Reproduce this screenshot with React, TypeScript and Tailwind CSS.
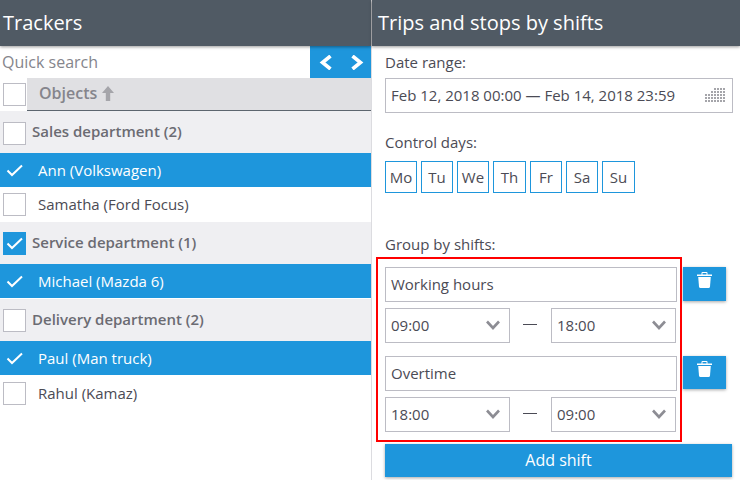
import React from "react";

const Check = () => (
  <svg width="18" height="14" viewBox="0 0 18 14" fill="none" className="block">
    <path d="M1.5 7.5 L6 12 L16 2.5" stroke="#fff" strokeWidth="2" />
  </svg>
);

const Box = ({ state }: { state?: "blue" | "plain" }) =>
  state === "blue" ? (
    <div className="w-[23px] h-[23px] flex items-center justify-center shrink-0"><Check /></div>
  ) : (
    <div className="w-[23px] h-[23px] bg-white border border-[#bcbcc4] shrink-0" />
  );

const Group = ({ label, checked, h }: { label: string; checked?: boolean; h: string }) => (
  <div className={`flex items-center bg-[#efeff2] pl-[3px] ${h}`}>
    {checked ? (
      <div className="w-[23px] h-[23px] bg-[#1e96dc] flex items-center justify-center shrink-0"><Check /></div>
    ) : (
      <Box />
    )}
    <span className={`ml-[6px] text-[15px] font-semibold text-[#6b6b72] ${h === "h-[40px]" ? "mb-[3px]" : "mb-[1px]"}`}>{label}</span>
  </div>
);

const Item = ({ label, selected, h }: { label: string; selected?: boolean; h: string }) => (
  <div className={`flex items-center pl-[3px] ${h} ${selected ? "bg-[#1e96dc] text-white" : "bg-white text-[#4b4b55]"}`}>
    <Box state={selected ? "blue" : "plain"} />
    <span className={`ml-[12px] text-[15px] ${selected ? "font-medium" : ""}`}>{label}</span>
  </div>
);

const Select = ({ value }: { value: string }) => (
  <div className="w-[125px] h-[35px] border border-[#bcbcc4] flex items-center justify-between pl-[5px] pr-[9px] text-[15px] text-[#4b4b55] bg-white">
    <span className="mb-[1px]">{value}</span>
    <svg width="14" height="10" viewBox="0 0 14 10" fill="none" className="mb-[2px]">
      <path d="M1 1.5 L7 8 L13 1.5" stroke="#8d8d94" strokeWidth="2.6" />
    </svg>
  </div>
);

const Trash = () => (
  <svg width="15" height="16" viewBox="0 0 15 16" fill="#fff">
    <path d="M0 2.5 H4.5 V1 Q4.5 0 5.5 0 H9.5 Q10.5 0 10.5 1 V2.5 H15 V4 H0 Z M5.5 1 V2.5 H9.5 V1 Z" />
    <path d="M1.2 5 H13.8 L13 14.5 Q12.8 16 11.6 16 H3.4 Q2.2 16 2 14.5 Z" />
  </svg>
);

const Shift = ({ name, from, to, btn }: { name: string; from: string; to: string; btn: string }) => (
  <div className="flex items-start">
    <div className="w-[292px]">
      <div className="h-[35px] border border-[#bcbcc4] flex items-center pl-[5px] text-[15px] text-[#4b4b55]">{name}</div>
      <div className="flex items-center mt-[6px]">
        <Select value={from} />
        <div className="w-[41px] flex justify-center pb-[3px] pr-[2px]"><div className="w-[14px] h-px bg-[#4b4b55]" /></div>
        <Select value={to} />
      </div>
    </div>
    <div className={`ml-[6px] w-[43px] ${btn} bg-[#1e96dc] shadow-[0_1px_3px_rgba(0,0,0,0.35)] flex justify-center pt-[5px] pr-[1px]`}>
      <Trash />
    </div>
  </div>
);

const days = ["Mo", "Tu", "We", "Th", "Fr", "Sa", "Su"];
const widths: Record<string, string> = { Th: "w-[33px]", Su: "w-[33px]" };

export default function App() {
  return (
    <div className="w-[740px] h-[480px] overflow-hidden bg-white flex font-['Open_Sans',sans-serif]">
      <div className="w-[372px] border-r border-[#dcdce0] shrink-0 flex flex-col">
        <div className="h-[46px] bg-[#505a64] flex items-center pl-[3px] text-[20px] text-white shadow-[0_1px_3px_rgba(0,0,0,0.4)] relative">Trackers</div>
        <div className="h-[32px] flex items-center">
          <div className="flex-1 pl-[2px] text-[16px] text-[#85858c]">Quick search</div>
          <div className="w-[61px] h-full bg-[#1e96dc] flex items-center pl-[9px] gap-[17px]">
            <svg width="14" height="15" viewBox="0 0 14 15" fill="none"><path d="M11.5 1 L3.5 7.5 L11.5 14" stroke="#fff" strokeWidth="3.6" /></svg>
            <svg width="14" height="15" viewBox="0 0 14 15" fill="none"><path d="M2.5 1 L10.5 7.5 L2.5 14" stroke="#fff" strokeWidth="3.6" /></svg>
          </div>
        </div>
        <div className="h-[33px] flex items-center pl-[3px] bg-white">
          <Box />
          <div className="flex-1 ml-px h-full bg-[#e0e0e3] border-b border-[#5d666f] flex items-center pl-[12px] text-[16px] font-semibold text-[#85858c]">
            <span className="mb-[2px]">Objects</span>
            <svg className="ml-[5px] mb-[2px]" width="12" height="15" viewBox="0 0 12 15" fill="#a5a5aa"><path d="M6 0 L12 7 H8.2 V15 H3.8 V7 H0 Z" /></svg>
          </div>
        </div>
        <div className="h-[2px] bg-[#efeff2]" />
        <Group label="Sales department (2)" h="h-[40px]" />
        <Item label="Ann (Volkswagen)" selected h="h-[34px]" />
        <Item label="Samatha (Ford Focus)" h="h-[35px]" />
        <Group label="Service department (1)" checked h="h-[42px]" />
        <Item label="Michael (Mazda 6)" selected h="h-[34px]" />
        <div className="h-px bg-white" />
        <Group label="Delivery department (2)" h="h-[42px]" />
        <Item label="Paul (Man truck)" selected h="h-[34px]" />
        <Item label="Rahul (Kamaz)" h="h-[37px]" />
      </div>
      <div className="flex-1 flex flex-col relative">
        <div className="h-[46px] bg-[#505a64] flex items-center pl-[6px] text-[20px] text-white shadow-[0_1px_3px_rgba(0,0,0,0.4)]">Trips and stops by shifts</div>
        <div className="pl-[13px] pr-[7px] text-[15px] text-[#4b4b55]">
          <div className="h-[32px] flex items-center">Date range:</div>
          <div className="h-[35px] border border-[#bcbcc4] flex items-center justify-between pl-[5px] pr-[5px]">
            <span>Feb 12, 2018 00:00 — Feb 14, 2018 23:59</span>
            <svg width="22" height="15" viewBox="0 0 22 15" fill="#a5a5aa">
              {[0, 1, 2, 3, 4].flatMap((r) =>
                [0, 1, 2, 3, 4, 5, 6].map((c) =>
                  r + c >= 3 || r >= 2 ? <rect key={`${r}-${c}`} x={c * 3} y={r * 3} width="2" height="2" /> : null
                )
              )}
            </svg>
          </div>
          <div className="mt-[19px] h-[20px] flex items-center">Control days:</div>
          <div className="mt-[9px] flex gap-[4px]">
            {days.map((d) => (
              <div key={d} className={`${widths[d] ?? "w-[32px]"} h-[32px] border border-[#1e96dc] flex items-center justify-center`}>{d}</div>
            ))}
          </div>
          <div className="mt-[41px] h-[20px] flex items-center">Group by shifts:</div>
          <div className="mt-[13px]"><Shift name="Working hours" from="09:00" to="18:00" btn="h-[34px]" /></div>
          <div className="mt-[13px]"><Shift name="Overtime" from="18:00" to="09:00" btn="h-[33px]" /></div>
          <div className="mt-[12px] w-[347px] h-[33px] bg-[#1e96dc] shadow-[0_1px_3px_rgba(0,0,0,0.35)] flex items-center justify-center text-[16px] font-medium text-white"><span className="mb-[2px]">Add shift</span></div>
        </div>
        <div className="absolute left-[4px] top-[257px] w-[306px] h-[185px] border-2 border-[#ff0000]" />
      </div>
    </div>
  );
}
